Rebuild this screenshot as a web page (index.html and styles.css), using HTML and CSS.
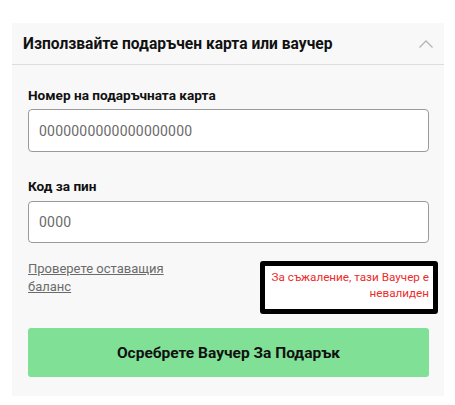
FILE: index.html
```html
<!DOCTYPE html>
<html lang="bg">
<head>
<meta charset="utf-8">
<title>Gift card</title>
<link rel="stylesheet" href="styles.css">
</head>
<body>
<section class="panel">
  <header class="panel-head">
    <h2 class="panel-title">Използвайте подаръчен карта или ваучер</h2>
    <svg class="chevron" width="16" height="10" viewBox="0 0 16 10"><polyline points="1.5,8.5 8,2 14.5,8.5" fill="none" stroke="#b5b5b5" stroke-width="1.3"/></svg>
  </header>
  <div class="panel-body">
    <label class="field-label">Номер на подаръчната карта</label>
    <input class="field-input" type="text" placeholder="0000000000000000000">
    <label class="field-label second">Код за пин</label>
    <input class="field-input pin" type="text" placeholder="0000">
    <div class="row">
      <a class="balance-link" href="#">Проверете оставащия баланс</a>
      <div class="error-box">За съжаление, тази Ваучер е невалиден</div>
    </div>
    <button class="redeem" type="button">Осребрете Ваучер За Подарък</button>
  </div>
</section>
</body>
</html>
```
FILE: styles.css
```css
* { box-sizing: border-box; }
body {
  margin: 0;
  background: #ffffff;
  font-family: Roboto, "Liberation Sans", Arial, sans-serif;
}
.panel {
  margin: 23px 11px 9px 12px;
  background: #f8f8f8;
}
.panel-head {
  height: 42px;
  border-bottom: 1px solid #dddddd;
  display: flex;
  align-items: center;
  justify-content: space-between;
  padding: 0 10px 0 11px;
}
.panel-title {
  margin: 0;
  font-size: 15.6px;
  font-weight: 700;
  color: #111111;
  line-height: 20px;
}
.chevron { display: block; }
.panel-body {
  padding: 22px 15px 19px 16px;
  display: flex;
  flex-direction: column;
}
.field-label {
  font-size: 13.6px;
  font-weight: 700;
  color: #111111;
  line-height: 17px;
  margin-bottom: 5px;
}
.field-label.second { margin-top: 26px; margin-bottom: 6px; }
.field-input {
  height: 43px;
  width: 100%;
  border: 1px solid #9a9a9a;
  border-radius: 4px;
  background: #ffffff;
  padding: 0 10px;
  font-family: inherit;
  font-size: 14px;
  letter-spacing: 0.2px;
  color: #333;
  outline: none;
}
.field-input.pin { height: 42px; }
.field-input::placeholder { color: #6b6b6b; opacity: 1; }
.row {
  display: flex;
  justify-content: space-between;
  align-items: flex-start;
  margin-top: 17px;
  margin-right: -9px;
}
.balance-link {
  max-width: 150px;
  font-size: 13px;
  line-height: 18px;
  color: #6b6b6b;
  text-decoration: underline;
}
.error-box {
  width: 178px;
  border: 5px solid #000000;
  border-radius: 3px;
  background: #ffffff;
  color: #ee2b2b;
  font-size: 11.7px;
  line-height: 16px;
  text-align: right;
  padding: 3px 4px 8px 0;
  margin-top: 1px;
}
.redeem {
  margin-top: 14px;
  height: 49px;
  width: 100%;
  border: none;
  border-radius: 3px;
  background: #80e096;
  color: #111111;
  font-family: inherit;
  font-size: 15.5px;
  font-weight: 700;
}
```
